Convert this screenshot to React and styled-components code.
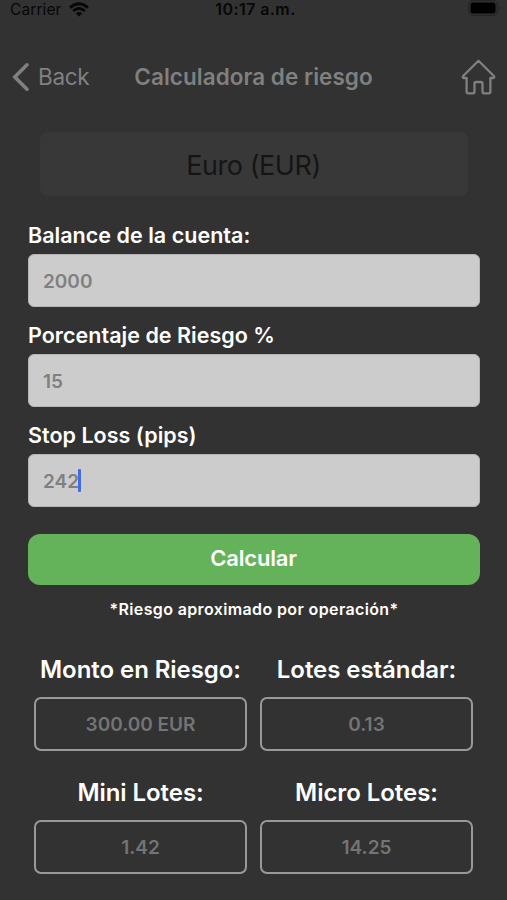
import React from "react";
import styled, { createGlobalStyle } from "styled-components";

const GlobalStyle = createGlobalStyle`
  * { box-sizing: border-box; }
  body { margin: 0; background: #323232; }
`;

const Screen = styled.main`
  width: 507px;
  height: 900px;
  overflow: hidden;
  display: flex;
  flex-direction: column;
  background: #323232;
  font-family: Inter, "Liberation Sans", sans-serif;
`;

const StatusBar = styled.div`
  height: 19px;
  flex: none;
  display: grid;
  grid-template-columns: 1fr auto 1fr;
  align-items: center;
  padding: 0 6px 0 10px;
  color: #070707;
  line-height: 19px;
`;

const Carrier = styled.span`
  display: flex;
  align-items: center;
  gap: 7px;
  font-size: 15.5px;
  letter-spacing: 0.1px;
`;

const Clock = styled.span`
  font-size: 16px;
  font-weight: 600;
  letter-spacing: 0.42px;
`;

const BatterySlot = styled.span`
  display: flex;
  justify-content: flex-end;
  padding-bottom: 3px;
`;

const NavBar = styled.header`
  height: 101px;
  flex: none;
  display: grid;
  grid-template-columns: 123px 1fr 123px;
  align-items: center;
  padding: 14px 11px 0;
  color: #808080;
`;

const BackButton = styled.a`
  display: flex;
  align-items: center;
  gap: 8px;
  font-size: 22.5px;
  line-height: 28px;
  letter-spacing: -0.3px;
`;

const Title = styled.h1`
  margin: 0;
  text-align: center;
  white-space: nowrap;
  font-size: 22.5px;
  line-height: 28px;
  font-weight: 600;
  letter-spacing: 0.03px;
`;

const HomeSlot = styled.span`
  display: flex;
  justify-content: flex-end;
`;

const CurrencyPicker = styled.div`
  height: 64px;
  flex: none;
  margin: 12px 39px 0 40px;
  border-radius: 8px;
  display: flex;
  align-items: center;
  justify-content: center;
  background: #383838;
  color: #151515;
  font-size: 27px;
  letter-spacing: -0.45px;
  padding: 2px 1px 0 0;
`;

const Form = styled.section`
  padding: 25px 27px 0 28px;
  display: flex;
  flex-direction: column;
`;

const Label = styled.label`
  height: 28px;
  line-height: 28px;
  margin-bottom: 5px;
  color: #fff;
  font-size: 21.5px;
  font-weight: 600;
  letter-spacing: 0.03px;
`;

const Field = styled.div`
  height: 53px;
  margin-bottom: ${(p) => (p.$last ? 27 : 14)}px;
  padding: 2px 14px 0;
  display: flex;
  align-items: center;
  border: 1px solid #b4b4b4;
  border-radius: 6px;
  background: #ccc;
  color: #808080;
  font-size: 19px;
  font-weight: 600;
`;

const Caret = styled.i`
  width: 3px;
  height: 23px;
  margin: 0 0 2px -1px;
  border-radius: 1px;
  background: #416be8;
`;

const CalculateButton = styled.button`
  height: 51px;
  border: 0;
  border-radius: 12px;
  padding: 0 1px 3px 0;
  background: #64b35a;
  color: #fff;
  font: 600 22px/28px Inter, "Liberation Sans", sans-serif;
  letter-spacing: -0.2px;
`;

const Note = styled.p`
  margin: 14px 0 0;
  height: 20px;
  line-height: 20px;
  text-align: center;
  color: #fff;
  font-size: 16px;
  font-weight: 600;
  letter-spacing: 0.37px;
`;

const Results = styled.section`
  display: grid;
  grid-template-columns: 213px 213px;
  column-gap: 13px;
  row-gap: 26px;
  padding: 35px 0 0 34px;
`;

const Result = styled.div`
  display: flex;
  flex-direction: column;
  align-items: center;
`;

const ResultTitle = styled.h2`
  margin: 0 0 11px;
  height: 32px;
  line-height: 32px;
  white-space: nowrap;
  color: #fff;
  font-size: 24px;
  font-weight: 600;
  letter-spacing: -0.06px;
`;

const ResultValue = styled.output`
  width: 100%;
  height: 54px;
  display: flex;
  align-items: center;
  justify-content: center;
  border: 2px solid #999;
  border-radius: 7px;
  color: #747474;
  font-size: 19px;
  font-weight: 600;
`;

const fields = [
  { label: "Balance de la cuenta:", value: "2000" },
  { label: "Porcentaje de Riesgo %", value: "15" },
  { label: "Stop Loss (pips)", value: "242", focused: true },
];

const results = [
  { title: "Monto en Riesgo:", value: "300.00 EUR" },
  { title: "Lotes estándar:", value: "0.13" },
  { title: "Mini Lotes:", value: "1.42" },
  { title: "Micro Lotes:", value: "14.25" },
];

const WifiIcon = () => (
  <svg width="20" height="15" viewBox="0 0 20 15" fill="none" stroke="currentColor" strokeWidth="2.9">
    <path d="M1 5.6Q10-2.2 19 5.6M4.2 9Q10 3.8 15.8 9" />
    <path d="M10 14.5 6.8 11.4Q10 8.8 13.2 11.4Z" fill="currentColor" stroke="none" />
  </svg>
);

const BatteryIcon = () => (
  <svg width="33" height="16" viewBox="0 0 33 16">
    <rect x=".7" y=".7" width="28.6" height="14.6" rx="4" fill="none" stroke="#242424" strokeWidth="1.2" />
    <rect x="2.5" y="2.5" width="25" height="11" rx="2.5" fill="#000" />
    <path d="M31 5.5Q33 8 31 10.5Z" fill="#242424" />
  </svg>
);

const ChevronIcon = () => (
  <svg width="19" height="30" viewBox="0 0 19 30" fill="none" stroke="currentColor" strokeWidth="3.6" strokeLinecap="round">
    <path d="M16 2.8 3.8 15 16 27.2" />
  </svg>
);

const HomeIcon = () => (
  <svg width="35" height="36" viewBox="0 0 35 36" fill="none" stroke="currentColor" strokeWidth="2.3" strokeLinejoin="round">
    <path d="M17.5 1.8 1.9 17.2Q1.5 19 3 19H5.6V32.5Q5.6 34.3 7.4 34.3H12Q13.5 34.3 13.5 32.5V24.5Q13.5 23 15 23H20Q21.5 23 21.5 24.5V32.5Q21.5 34.3 23 34.3H27.6Q29.4 34.3 29.4 32.5V19H32Q33.5 19 33.1 17.2Z" />
  </svg>
);

export default function App() {
  return (
    <>
      <GlobalStyle />
      <Screen>
        <StatusBar>
          <Carrier>Carrier <WifiIcon /></Carrier>
          <Clock>10:17 a.m.</Clock>
          <BatterySlot><BatteryIcon /></BatterySlot>
        </StatusBar>
        <NavBar>
          <BackButton><ChevronIcon />Back</BackButton>
          <Title>Calculadora de riesgo</Title>
          <HomeSlot><HomeIcon /></HomeSlot>
        </NavBar>
        <CurrencyPicker>Euro (EUR)</CurrencyPicker>
        <Form>
          {fields.map((f, i) => (
            <React.Fragment key={f.label}>
              <Label>{f.label}</Label>
              <Field $last={i === fields.length - 1}>
                {f.value}
                {f.focused && <Caret />}
              </Field>
            </React.Fragment>
          ))}
          <CalculateButton>Calcular</CalculateButton>
          <Note>*Riesgo aproximado por operación*</Note>
        </Form>
        <Results>
          {results.map((r) => (
            <Result key={r.title}>
              <ResultTitle>{r.title}</ResultTitle>
              <ResultValue>{r.value}</ResultValue>
            </Result>
          ))}
        </Results>
      </Screen>
    </>
  );
}
